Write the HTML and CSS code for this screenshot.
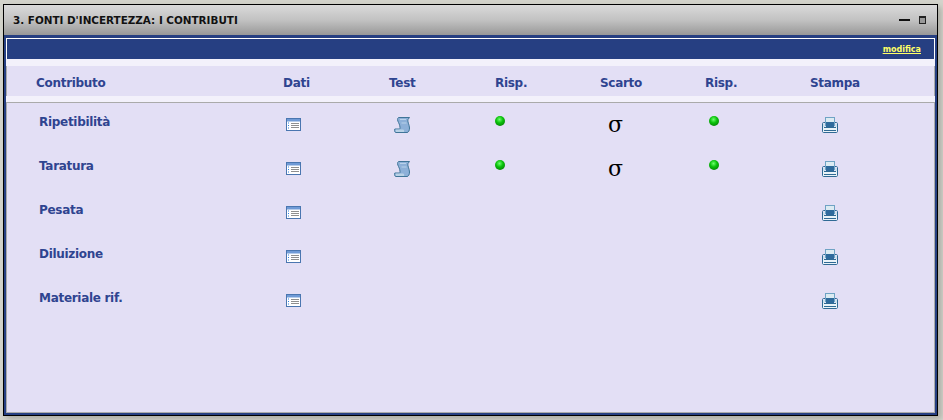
FILE: index.html
```html
<!DOCTYPE html>
<html lang="it">
<head>
<meta charset="utf-8">
<title>Fonti d'incertezza</title>
<link rel="stylesheet" href="styles.css">
</head>
<body>
<svg class="defs" width="0" height="0" aria-hidden="true">
  <defs>
    <symbol id="i-data" viewBox="0 0 15 13">
      <rect x=".5" y=".5" width="14" height="12" fill="#fff" stroke="#4a76b0"/>
      <rect x="1" y="1" width="13" height="2.500" fill="#6f9ad6"/>
      <path d="M2 5h1M2 7.500h1M2 10h1" stroke="#2f7fe0"/>
      <path d="M5 5.500h8M5 7.500h8M5 9.500h8" stroke="#8f8f8f"/>
    </symbol>
    <symbol id="i-scroll" viewBox="0 0 16 16">
      <path d="M4.500 .5H15.500L14 2.500C13 4 15.500 8 15.500 11C15.500 13.500 14.500 15.500 13 15.500H2C.8 15.500 .2 14 .8 12H5.500C6.500 12 6 8 4.500 5.500C3.500 3.500 3 1.500 4.500 .5Z" fill="#8db0d8" stroke="#3f7598"/>
      <path d="M1.500 12.500H9C10 12.500 10.500 13.500 10 15H2Z" fill="#b9d2e6"/>
      <path d="M6 2.500H12M7.500 6H12.500" stroke="#b9d2ea"/>
    </symbol>
    <symbol id="i-print" viewBox="0 0 16 16">
      <rect x="3.500" y=".5" width="9" height="8" fill="#dcebf2" stroke="#6fa3c4"/>
      <rect x="4" y="5" width="8" height="5" fill="#2f6a9c"/>
      <path d="M3 5.500H1.500C.9 5.500 .5 6 .5 6.500V14.500C.5 15 1 15.500 1.500 15.500H14.500C15 15.500 15.500 15 15.500 14.500V6.500C15.500 6 15 5.500 14.500 5.500H13" fill="none" stroke="#2f6a94"/>
      <rect x="1" y="10" width="14" height="5" fill="#eaf3f8"/>
      <path d="M2 10.500H14M2 13.500H14" stroke="#2f6a94"/>
      <rect x="1" y="7" width="2" height="3" fill="#cfe2ee"/>
      <rect x="13" y="7" width="2" height="3" fill="#cfe2ee"/>
    </symbol>
  </defs>
</svg>

<section class="window">
  <header class="titlebar">
    <h1 class="title">3. FONTI D'INCERTEZZA: I CONTRIBUTI</h1>
    <div class="controls">
      <span class="ctl-min"></span>
      <span class="ctl-max"></span>
    </div>
  </header>
  <div class="body">
    <div class="toolbar"><a class="edit" href="#">modifica</a></div>
    <div class="band"></div>
    <div class="head grid">
      <div class="name-h">Contributo</div>
      <div>Dati</div>
      <div>Test</div>
      <div>Risp.</div>
      <div>Scarto</div>
      <div>Risp.</div>
      <div>Stampa</div>
    </div>
    <div class="band small"></div>
    <div class="rows">
      <div class="row grid">
        <div class="name">Ripetibilità</div>
        <div class="cell"><svg class="ico-data"><use href="#i-data"/></svg></div>
        <div class="cell"><svg class="ico-scroll"><use href="#i-scroll"/></svg></div>
        <div class="cell"><span class="dot"></span></div>
        <div class="cell"><span class="sigma">σ</span></div>
        <div class="cell"><span class="dot dot-alt"></span></div>
        <div class="cell"><svg class="ico-print"><use href="#i-print"/></svg></div>
      </div>
      <div class="row grid">
        <div class="name">Taratura</div>
        <div class="cell"><svg class="ico-data"><use href="#i-data"/></svg></div>
        <div class="cell"><svg class="ico-scroll"><use href="#i-scroll"/></svg></div>
        <div class="cell"><span class="dot"></span></div>
        <div class="cell"><span class="sigma">σ</span></div>
        <div class="cell"><span class="dot dot-alt"></span></div>
        <div class="cell"><svg class="ico-print"><use href="#i-print"/></svg></div>
      </div>
      <div class="row grid">
        <div class="name">Pesata</div>
        <div class="cell"><svg class="ico-data"><use href="#i-data"/></svg></div>
        <div></div><div></div><div></div><div></div>
        <div class="cell"><svg class="ico-print"><use href="#i-print"/></svg></div>
      </div>
      <div class="row grid">
        <div class="name">Diluizione</div>
        <div class="cell"><svg class="ico-data"><use href="#i-data"/></svg></div>
        <div></div><div></div><div></div><div></div>
        <div class="cell"><svg class="ico-print"><use href="#i-print"/></svg></div>
      </div>
      <div class="row grid">
        <div class="name">Materiale rif.</div>
        <div class="cell"><svg class="ico-data"><use href="#i-data"/></svg></div>
        <div></div><div></div><div></div><div></div>
        <div class="cell"><svg class="ico-print"><use href="#i-print"/></svg></div>
      </div>
    </div>
  </div>
</section>
</body>
</html>
```

FILE: styles.css
```css
html, body {
  margin: 0;
  height: 100%;
  overflow: hidden;
  background: #d4d4cc;
}
body {
  padding: 4px 5px 0 3px;
  box-sizing: border-box;
  font-family: "DejaVu Sans", Verdana, sans-serif;
}
.defs { display: block; height: 0; }
.window {
  height: 412px;
  border: 1px solid #000;
  box-shadow: 3px 3px 6px #a9a9a1;
  display: flex;
  flex-direction: column;
  background: #263f82;
  box-sizing: border-box;
}
.titlebar {
  height: 30px;
  flex: none;
  display: flex;
  align-items: center;
  justify-content: space-between;
  padding: 0 11px 0 9px;
  background: linear-gradient(#dadada, #c2c2c2 50%, #989898);
}
.title {
  margin: 0;
  font-size: 10.4px;
  font-weight: bold;
  color: #111;
}
.controls { display: flex; align-items: center; gap: 9px; }
.ctl-min { width: 11px; height: 2px; background: #111; }
.ctl-max { width: 5px; height: 5px; border: 1px solid #222; border-top-width: 2px; background: #999; }
.body {
  flex: 1;
  min-height: 0;
  margin: 3px 2px 2px 2px;
  background: #e3dff5;
  display: flex;
  flex-direction: column;
  border-bottom: 1px solid #aaa;
  border-left: 1px solid #aaa;
  border-right: 1px solid #aaa;
}
.toolbar {
  height: 21px;
  flex: none;
  box-sizing: border-box;
  border-top: 1px solid #fff;
  background: #263f82;
  display: flex;
  justify-content: flex-end;
  align-items: center;
  padding-right: 14px;
  margin: 0 -1px;
  box-shadow: inset 1px 0 #fff, inset -1px 0 #fff;
}
.edit {
  font-size: 8px;
  font-weight: bold;
  color: #ffff66;
}
.band { height: 7px; background: #f3f1fb; flex: none; margin: 0 -1px; }
.band.small { height: 6px; border-bottom: 1px solid #aaa; }
.grid {
  display: grid;
  grid-template-columns: 277px 106px 106px 105px 105px 105px 1fr;
}
.head {
  height: 30px;
  box-sizing: border-box;
  padding-top: 3px;
  flex: none;
  align-items: center;
  font-size: 12px;
  letter-spacing: -0.3px;
  font-weight: bold;
  color: #2f4490;
  margin: 0 -1px;
}
.name-h { padding-left: 30px; }
.rows { display: flex; flex-direction: column; margin: 0 -1px; }
.row { height: 44px; flex: none; }
.name {
  padding: 12px 0 0 33px;
  font-size: 12px;
  letter-spacing: -0.3px;
  font-weight: bold;
  color: #2f4490;
}
.cell { padding-top: 13px; }
.ico-data { display: block; width: 15px; height: 13px; margin: 2px 0 0 3px; }
.ico-scroll { display: block; width: 16px; height: 16px; margin: 1px 0 0 5px; }
.ico-print { display: block; width: 16px; height: 16px; margin: 1px 0 0 12px; }
.dot {
  display: block;
  width: 10px;
  height: 10px;
  border-radius: 50%;
  background: radial-gradient(circle at 45% 35%, #6dff6d, #0ac20a 40%, #046604 100%);
}
.dot-alt { margin-left: 4px; }
.sigma {
  display: block;
  margin: -2px 0 0 8px;
  font-family: "DejaVu Serif", serif;
  font-size: 22px;
  line-height: 22px;
  color: #000;
}
```
